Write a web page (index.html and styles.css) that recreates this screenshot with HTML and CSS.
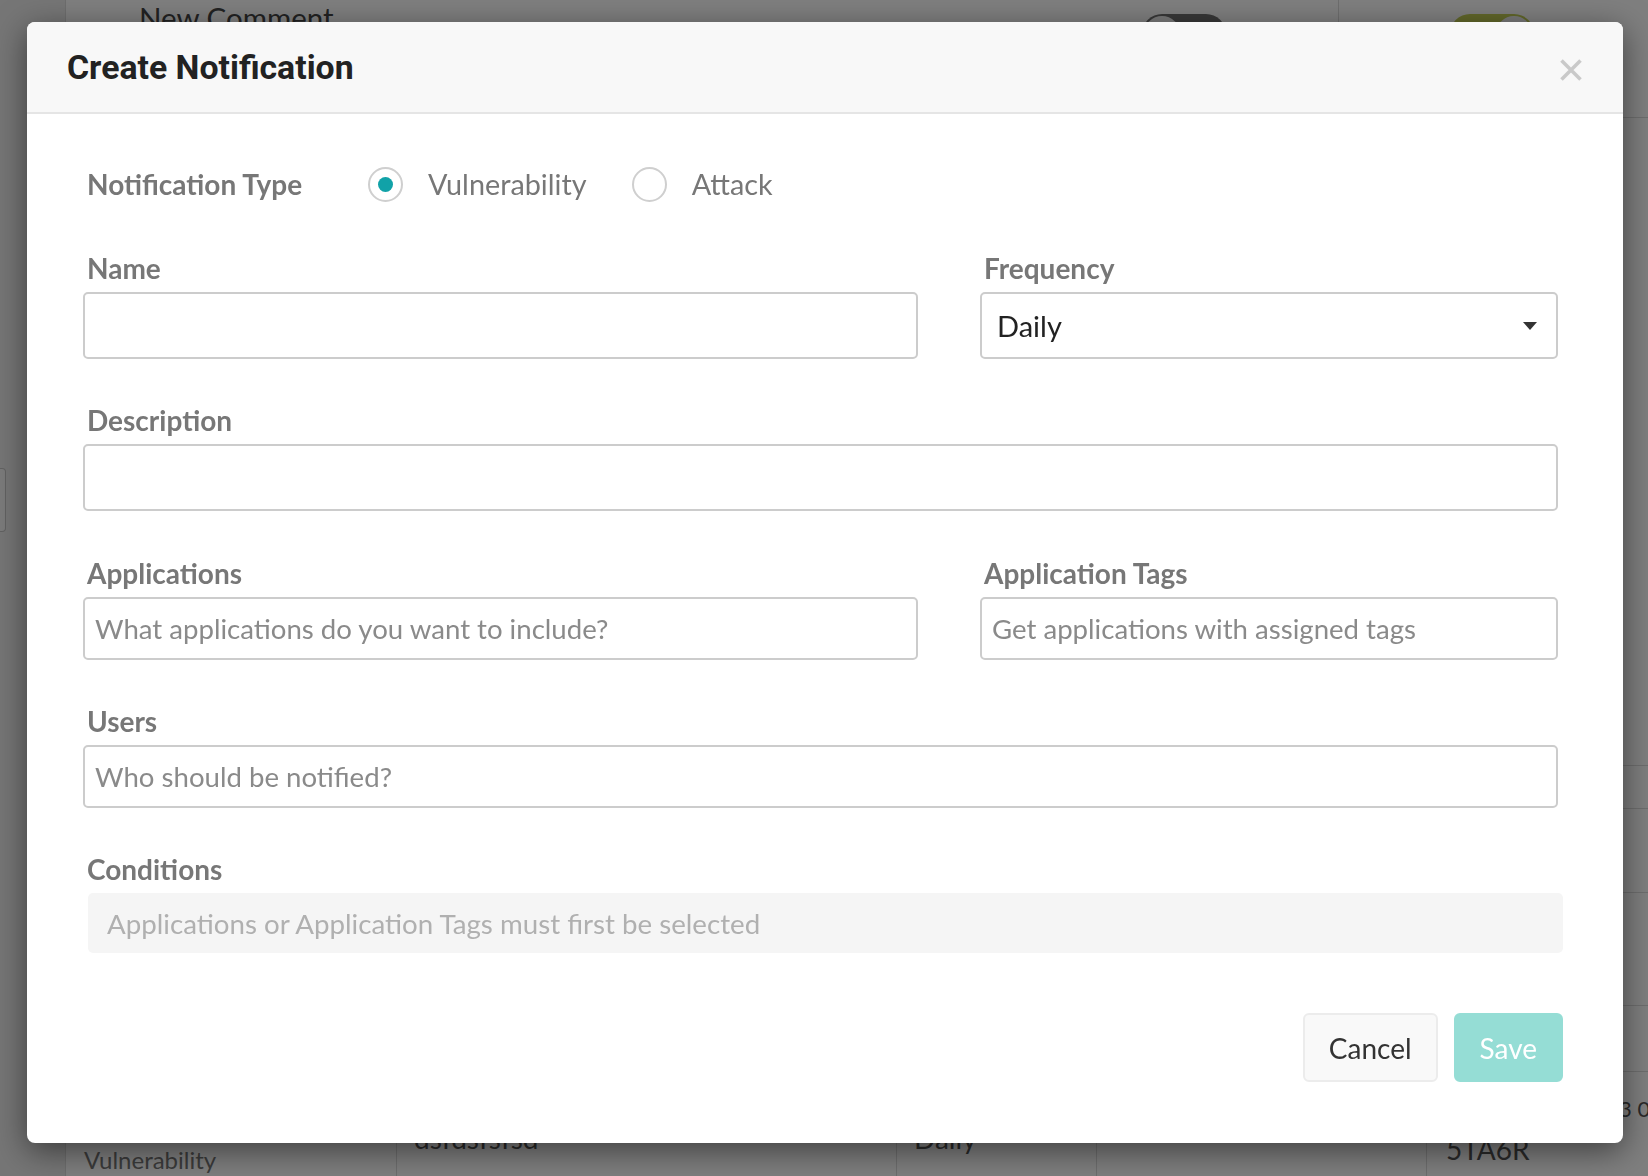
FILE: index.html
```html
<!DOCTYPE html>
<html lang="en">
<head>
<meta charset="utf-8">
<title>Create Notification</title>
<link rel="stylesheet" href="styles.css">
</head>
<body>
<div class="app">
  <aside class="bg-side">
    <span class="side-tab"></span>
  </aside>
  <main class="bg-content">
    <div class="bg-top">
      <div class="bg-main">
        <span class="bg-title">New Comment</span>
        <span class="toggle toggle-off"><span class="knob"></span></span>
      </div>
      <div class="bg-end">
        <span class="toggle toggle-on"><span class="knob"></span></span>
      </div>
    </div>
    <div class="bg-gap"></div>
    <div class="bg-row r1"><div></div><div></div><div></div><div></div><div></div></div>
    <div class="bg-row r2"><div></div><div></div><div></div><div></div><div></div></div>
    <div class="bg-row r3"><div></div><div></div><div></div><div></div><div></div></div>
    <div class="bg-row r4"><div></div><div></div><div></div><div></div><div></div></div>
    <div class="bg-row r5">
      <div class="cell-type">Vulnerability</div>
      <div class="cell-text">dsfdsfsfsd</div>
      <div class="cell-text">Daily</div>
      <div></div>
      <div class="cell-key"><span class="key-line1">3 0</span><span class="key-line2">5TA6R</span></div>
    </div>
  </main>
</div>

<div class="backdrop"></div>

<div class="modal" role="dialog">
  <div class="modal-header">
    <h2 class="modal-title">Create Notification</h2>
    <span class="close" aria-label="Close">
      <svg width="22" height="22" viewBox="0 0 22 22"><path d="M1.5 1.5L20.5 20.5M20.5 1.5L1.5 20.5" stroke="#c9c9c9" stroke-width="3.6" fill="none"/></svg>
    </span>
  </div>
  <div class="modal-body">
    <div class="type-row">
      <span class="type-label">Notification Type</span>
      <span class="radio-option"><span class="radio checked"><span class="dot"></span></span>Vulnerability</span>
      <span class="radio-option"><span class="radio"></span>Attack</span>
    </div>

    <div class="form">
      <div class="grid-2 first">
        <div class="field">
          <label class="field-label">Name</label>
          <div class="input"></div>
        </div>
        <div class="field">
          <label class="field-label">Frequency</label>
          <div class="input select"><span class="value">Daily</span><span class="caret"></span></div>
        </div>
      </div>

      <div class="field spaced">
        <label class="field-label">Description</label>
        <div class="input"></div>
      </div>

      <div class="grid-2 spaced wide">
        <div class="field">
          <label class="field-label">Applications</label>
          <div class="input short"><span class="placeholder">What applications do you want to include?</span></div>
        </div>
        <div class="field">
          <label class="field-label">Application Tags</label>
          <div class="input short"><span class="placeholder">Get applications with assigned tags</span></div>
        </div>
      </div>

      <div class="field spaced">
        <label class="field-label">Users</label>
        <div class="input short"><span class="placeholder">Who should be notified?</span></div>
      </div>
    </div>

    <div class="conditions-field">
      <label class="field-label">Conditions</label>
      <div class="conditions">Applications or Application Tags must first be selected</div>
    </div>

    <div class="modal-footer">
      <button class="btn btn-default" type="button">Cancel</button>
      <button class="btn btn-primary" type="button">Save</button>
    </div>
  </div>
</div>
</body>
</html>
```

FILE: styles.css
```css
html, body {
  margin: 0;
  padding: 0;
}

body {
  font-family: Lato, "Open Sans", "Liberation Sans", sans-serif;
  width: 1648px;
  height: 1176px;
  overflow: hidden;
  position: relative;
}

/* ---------- background page (under the backdrop) ---------- */
.app {
  display: grid;
  grid-template-columns: 66px 1fr;
  height: 1176px;
  overflow: hidden;
  background: #ffffff;
  color: #444;
}

.bg-side {
  background: #ececec;
  border-right: 1px solid #dcdcdc;
  padding-top: 468px;
}

.side-tab {
  display: block;
  width: 5px;
  height: 62px;
  border: 1px solid #c4c4c4;
  border-left: 0;
  border-radius: 0 4px 4px 0;
  background: #f7f7f7;
}

.bg-content {
  min-width: 0;
}

.bg-top {
  display: grid;
  grid-template-columns: 1273px 1fr;
  height: 118px;
  box-sizing: border-box;
  border-bottom: 1px solid #dcdcdc;
}

.bg-main {
  display: flex;
  align-items: flex-start;
  padding: 1px 112px 0 73px;
  border-right: 1px solid #dcdcdc;
}

.bg-title {
  font-size: 29.5px;
  line-height: 34px;
  color: #444;
}

.bg-end {
  padding: 14px 0 0 111px;
}

.toggle {
  display: flex;
  align-items: center;
  width: 84px;
  height: 40px;
  border-radius: 20px;
  box-sizing: border-box;
  padding: 2px;
}

.toggle-off {
  margin-left: auto;
  margin-top: 13px;
  background: #707070;
}

.toggle-on {
  background: #c2cf55;
  justify-content: flex-end;
}

.knob {
  width: 36px;
  height: 36px;
  border-radius: 50%;
  background: #f2f2f2;
}

.bg-gap {
  height: 647px;
}

.bg-row {
  display: grid;
  grid-template-columns: 331px 500px 200px 330px 1fr;
  box-sizing: border-box;
  border-top: 1px solid #dcdcdc;
}

.bg-row > div {
  border-right: 1px solid #dcdcdc;
}

.bg-row > div:last-child {
  border-right: 0;
}

.r1 { height: 43px; }
.r2 { height: 84px; }
.r3 { height: 113px; }
.r4 { height: 66px; }
.r5 { height: 240px; }

.cell-type {
  padding: 73px 0 0 18px;
  font-size: 24px;
  line-height: 29px;
  color: #777;
}

.cell-text {
  padding: 49px 0 0 17px;
  font-size: 28px;
  line-height: 34px;
  color: #555;
}

.cell-key {
  display: flex;
  flex-direction: column;
  padding: 17px 0 0 19px;
  font-size: 28px;
  line-height: 40px;
  color: #555;
  white-space: nowrap;
}

.key-line1 {
  padding-left: 173px;
  font-size: 22px;
}

/* ---------- backdrop + modal ---------- */
.backdrop {
  position: fixed;
  inset: 0;
  background: rgba(0, 0, 0, 0.5);
}

.modal {
  position: absolute;
  top: 22px;
  left: 27px;
  width: 1596px;
  background: #ffffff;
  border-radius: 8px;
  box-shadow: 0 8px 32px rgba(0, 0, 0, 0.5);
  overflow: hidden;
}

.modal-header {
  display: flex;
  align-items: center;
  box-sizing: border-box;
  height: 92px;
  padding: 0 41px 0 40px;
  background: #f8f8f8;
  border-bottom: 2px solid #e5e5e5;
}

.modal-title {
  margin: 2px 0 0;
  font-family: Roboto, "Liberation Sans", sans-serif;
  font-weight: 700;
  font-size: 33.8px;
  line-height: 40px;
  color: #222;
}

.close {
  margin-left: auto;
  margin-top: 6px;
  display: flex;
}

.modal-body {
  padding: 52px 60px 61px 60px;
}

.type-row {
  display: flex;
  align-items: center;
  height: 35px;
  margin-top: 1px;
}

.type-label {
  width: 281px;
  font-weight: 700;
  font-size: 28px;
  line-height: 35px;
  color: #777;
}

.radio-option {
  display: flex;
  align-items: center;
  gap: 25px;
  margin-right: 45px;
  font-size: 28.8px;
  line-height: 35px;
  color: #777;
}

.radio {
  display: flex;
  align-items: center;
  justify-content: center;
  width: 35px;
  height: 35px;
  box-sizing: border-box;
  border: 2px solid #cfcfcf;
  border-radius: 50%;
  background: #fff;
}

.dot {
  width: 15px;
  height: 15px;
  border-radius: 50%;
  background: #11a2a8;
}

.form {
  margin: 0 5px 0 -4px;
}

.grid-2 {
  display: grid;
  grid-template-columns: 835px 578px;
  column-gap: 62px;
}

.grid-2.first {
  margin-top: 49px;
}

.spaced {
  margin-top: 44px;
}

.spaced.wide {
  margin-top: 45px;
}

.field-label {
  display: block;
  padding-left: 4px;
  margin-bottom: 7px;
  font-weight: 700;
  font-size: 28px;
  line-height: 34px;
  color: #777;
}

.input {
  display: flex;
  align-items: center;
  box-sizing: border-box;
  height: 67px;
  padding: 0 10px;
  border: 2px solid #cccccc;
  border-radius: 5px;
  background: #fff;
  font-size: 27.6px;
}

.input.short {
  height: 63px;
}

.placeholder {
  color: #8a8a8a;
  white-space: nowrap;
}

.select {
  padding: 0 19px 0 15px;
  font-size: 29px;
}

.value {
  color: #222;
}

.caret {
  margin-left: auto;
  width: 0;
  height: 0;
  border-left: 7.5px solid transparent;
  border-right: 7.5px solid transparent;
  border-top: 8px solid #333;
}

.conditions-field {
  margin-top: 44px;
}

.conditions-field .field-label {
  padding-left: 0;
}

.conditions {
  display: flex;
  align-items: center;
  box-sizing: border-box;
  height: 60px;
  margin-left: 1px;
  padding: 0 19px;
  border-radius: 5px;
  background: #f5f5f5;
  color: #b0b0b0;
  font-size: 27.7px;
  white-space: nowrap;
}

.modal-footer {
  display: flex;
  justify-content: flex-end;
  gap: 16px;
  margin-top: 60px;
}

.btn {
  box-sizing: border-box;
  height: 69px;
  padding: 0 24px;
  border: 2px solid;
  border-radius: 6px;
  font-family: Lato, "Open Sans", sans-serif;
  font-size: 28px;
  line-height: 1;
  cursor: pointer;
}

.btn-default {
  background: #f9f9f9;
  border-color: #ececec;
  color: #333;
}

.btn-primary {
  padding: 0 24px;
  background: #95ddd5;
  border-color: #95ddd5;
  color: #fff;
}
```
